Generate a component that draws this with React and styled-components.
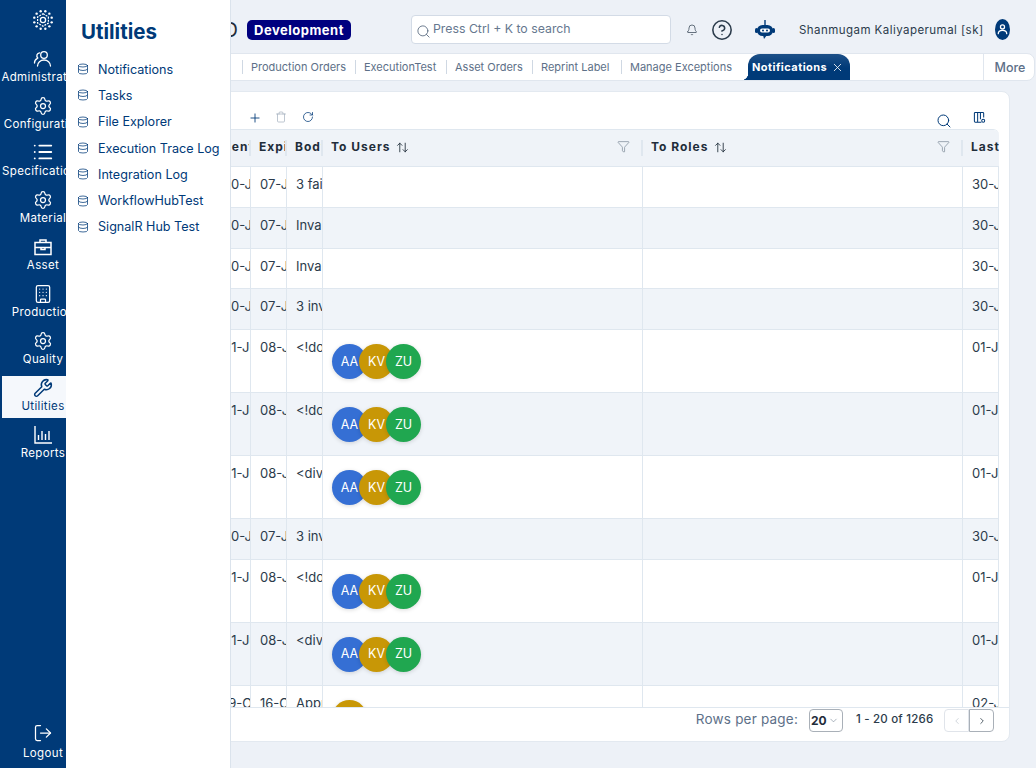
import React from "react";
import styled, { createGlobalStyle } from "styled-components";
import {
  Settings, List, Database, Plus, Trash, RotateCw, Search, Bell, CircleHelp, Funnel,
  ArrowUpDown, X, ChevronDown, ChevronLeft, ChevronRight, LogOut, Wrench, Building,
} from "lucide-react";

const NAVY = "#003a78";
const FONT = `Inter, "Noto Sans", "Liberation Sans", sans-serif`;

const Global = createGlobalStyle`
  html, body { margin: 0; height: 100%; background: #edf1f7; overflow: hidden; }
  * { box-sizing: border-box; }
  body { font-family: ${FONT}; }
`;

const Page = styled.div`
  position: relative;
  display: flex;
  width: 1036px;
  height: 768px;
  overflow: hidden;
`;

const Rail = styled.nav`
  flex: 0 0 86px;
  display: flex;
  flex-direction: column;
  align-items: center;
  background: ${NAVY};
  color: #fff;
  padding-top: 9px;
`;
const LogoMark = styled.div`
  height: 38px;
  display: flex;
  justify-content: center;
`;
const RailItem = styled.div`
  width: 82px;
  height: 42px;
  margin-bottom: 5px;
  flex: none;
  display: flex;
  flex-direction: column;
  align-items: center;
  justify-content: flex-end;
  gap: 1px;
  padding-bottom: 4px;
  background: ${(p) => (p.$active ? "#f5f8fc" : "transparent")};
  color: ${(p) => (p.$active ? NAVY : "#fff")};
  font-size: 11.5px;
  line-height: 15px;
  letter-spacing: 0.35px;
  white-space: nowrap;
`;
const RailBottom = styled(RailItem)`
  margin-top: auto;
  margin-bottom: 3px;
  gap: 3px;
`;

const Flyout = styled.aside`
  position: absolute;
  left: 66px;
  top: 0;
  bottom: 0;
  width: 165px;
  background: #fff;
  border-right: 1px solid #dbe3ec;
  padding: 19px 0 0 11px;
  color: ${NAVY};
`;
const FlyoutTitle = styled.h2`
  margin: 0 0 11px 4px;
  font-size: 20.5px;
  line-height: 26px;
  font-weight: 700;
`;
const FlyoutLink = styled.div`
  display: flex;
  align-items: center;
  gap: 9px;
  height: 26.3px;
  font-size: 12.6px;
  white-space: nowrap;
`;

const Main = styled.main`
  flex: 1;
  min-width: 0;
  display: flex;
  flex-direction: column;
`;

const Header = styled.header`
  height: 53px;
  flex: none;
  display: flex;
  align-items: center;
  padding-top: 12px;
  padding-bottom: 6px;
`;
const Brand = styled.div`
  width: 152px;
  text-align: right;
  font-size: 20px;
  font-weight: 400;
  color: #1f2d3a;
`;
const Badge = styled.div`
  margin-left: 9px;
  width: 104px;
  height: 20px;
  border-radius: 5px;
  background: #00007f;
  color: #fff;
  font-size: 13px;
  font-weight: 700;
  letter-spacing: 0.5px;
  display: flex;
  align-items: center;
  justify-content: center;
`;
const SearchBox = styled.div`
  margin-left: 60px;
  width: 260px;
  height: 29px;
  background: #fff;
  border: 1px solid #d3dbe6;
  border-radius: 4px;
  display: flex;
  align-items: center;
  gap: 2px;
  padding: 0 4px;
  color: #66788f;
  font-size: 12.3px;
  svg { margin-top: 4px; color: #4d6078; }
  span { margin-bottom: 2px; }
`;
const HeadIcons = styled.div`
  display: flex;
  align-items: center;
  margin-left: 15px;
  color: #2b3b4b;
`;
const HelpWrap = styled.div`
  display: flex;
  margin-left: 13px;
`;
const BotWrap = styled.div`
  display: flex;
  margin-left: 21px;
`;
const UserName = styled.div`
  margin-left: 23px;
  width: 184px;
  font-size: 11.5px;
  letter-spacing: 0.45px;
  color: #2b3b4b;
  white-space: nowrap;
`;
const UserAvatar = styled.div`
  margin-left: 12px;
  width: 15px;
  height: 21px;
  border-radius: 50%;
  background: ${NAVY};
  display: flex;
  align-items: center;
  justify-content: center;
`;

const TabBar = styled.div`
  height: 28px;
  flex: none;
  margin-right: 1px;
  background: #fff;
  border: 1px solid #e0e6ee;
  border-radius: 0 8px 8px 0;
  display: flex;
  align-items: center;
`;
const Tab = styled.div`
  flex: 0 0 ${(p) => p.$w}px;
  height: 14px;
  border-right: ${(p) => (p.$last ? "none" : "1px solid #cfd8e3")};
  padding-left: ${(p) => p.$pad ?? 8}px;
  font-size: 11px;
  line-height: 14px;
  color: #5d7088;
  white-space: nowrap;
  overflow: hidden;
`;
const ActiveTab = styled.div`
  position: relative;
  margin-left: 8px;
  flex: 0 0 102px;
  height: 26px;
  align-self: flex-end;
  border-radius: 12px 12px 0 0;
  background: linear-gradient(#1d5088, ${NAVY} 55%);
  color: #fff;
  font-size: 11px;
  font-weight: 700;
  letter-spacing: 0.45px;
  display: flex;
  align-items: center;
  gap: 4px;
  padding-left: 4px;
  white-space: nowrap;
  &::before {
    content: "";
    position: absolute;
    left: -7px;
    bottom: 0;
    width: 7px;
    height: 7px;
    background: radial-gradient(circle at 0 0, transparent 7px, ${NAVY} 7.5px);
  }
`;
const More = styled.div`
  margin-left: auto;
  width: 51px;
  height: 100%;
  padding-left: 2px;
  border-left: 1px solid #e0e6ee;
  display: flex;
  align-items: center;
  justify-content: center;
  font-size: 12.5px;
  font-weight: 500;
  color: #5d7088;
`;

const Card = styled.section`
  margin: 10px 26px 26px 10px;
  flex: 1;
  min-height: 0;
  background: #fff;
  border: 1px solid #e3e9f0;
  border-radius: 8px;
  padding: 0 10px;
  display: flex;
  flex-direction: column;
`;
const Toolbar = styled.div`
  height: 37px;
  flex: none;
  display: flex;
  align-items: flex-start;
  padding: 19px 13px 0 141px;
  gap: 13px;
  color: ${NAVY};
`;
const ToolSpacer = styled.div`
  flex: 1;
`;
const TrashWrap = styled.div`
  display: flex;
  margin-right: 2px;
  color: #9aa8b8;
`;
const SearchTool = styled.div`
  display: flex;
  margin-top: 2px;
  margin-right: 8px;
`;
const TableView = styled.div`
  flex: 1;
  min-height: 0;
  overflow: hidden;
  border: solid #dfe7ef;
  border-width: 1px 0 0 0;
  border-radius: 6px 6px 0 0;
`;
const columns = "108px 36px 36px 36px 320px 320px 36px";
const HeadRow = styled.div`
  display: grid;
  grid-template-columns: ${columns};
  height: 37px;
  background: #eff3f8;
  border-bottom: 1px solid #dfe7ef;
`;
const HeadCell = styled.div`
  display: flex;
  align-items: center;
  min-width: 0;
  padding-left: 8px;
  font-size: 12px;
  font-weight: 700;
  letter-spacing: 1px;
  color: #1f2d3a;
  white-space: nowrap;
  padding-bottom: 3px;
`;
const HeadLabel = styled.span`
  flex: 1;
  min-width: 0;
  overflow: hidden;
  display: flex;
  align-items: center;
  gap: 5px;
  svg { flex: none; margin-top: 2px; }
`;
const HeadFilter = styled.span`
  display: flex;
  color: #6f7e8e;
  margin-right: 11px;
`;
const HeadDivider = styled.i`
  flex: none;
  width: 2px;
  height: 16px;
  margin-top: 2px;
  background: #dfe7ef;
`;
const Row = styled.div`
  display: grid;
  grid-template-columns: ${columns};
  height: ${(p) => (p.$tall ? 63 : 40.75)}px;
  background: ${(p) => (p.$alt ? "#f0f4f9" : "#fff")};
  border-bottom: 1px solid #dfe7ef;
`;
const Cell = styled.div`
  min-width: 0;
  overflow: hidden;
  white-space: nowrap;
  padding: 8px 0 0 ${(p) => p.$pad ?? 9}px;
  border-right: 1px solid #dfe7ef;
  font-size: 13px;
  line-height: 18px;
  color: #2b3b4b;
`;
const AvatarCell = styled(Cell)`
  padding: 14px 0 0 9px;
  display: flex;
`;
const Avatar = styled.div`
  flex: none;
  width: 35px;
  height: 35px;
  border-radius: 50%;
  margin-right: -8px;
  background: ${(p) => p.$bg};
  color: #fff;
  font-size: 12.5px;
  display: flex;
  align-items: center;
  justify-content: center;
  box-shadow: 0 1px 4px rgba(0, 0, 0, 0.15);
`;
const Pager = styled.footer`
  height: 34px;
  flex: none;
  margin: 0 -10px;
  padding: 1px 15px 0 0;
  border-top: 1px solid #dfe7ef;
  display: flex;
  align-items: flex-start;
  justify-content: flex-end;
  font-size: 13px;
  line-height: 21px;
`;
const PagerLabel = styled.span`
  color: #5d7088;
  font-size: 13.5px;
  letter-spacing: 0.2px;
`;
const SizeSelect = styled.div`
  margin-left: 11px;
  width: 34px;
  height: 23px;
  border: 1px solid #a9b0b8;
  border-radius: 4px;
  display: flex;
  align-items: center;
  justify-content: space-between;
  padding: 0 3px 0 1px;
  font-size: 12px;
  font-weight: 700;
  color: #1f2d3a;
  svg { color: #7c8a9a; }
`;
const Range = styled.span`
  margin-left: 13px;
  width: 88px;
  font-size: 11.5px;
  font-weight: 500;
  letter-spacing: 0.2px;
  color: #2b3b4b;
`;
const PageBtn = styled.div`
  width: 25px;
  height: 23px;
  display: flex;
  align-items: center;
  justify-content: center;
  border: 1px solid ${(p) => (p.$off ? "#e0e4ea" : "#a9b0b8")};
  border-radius: ${(p) => (p.$off ? "4px 0 0 4px" : "0 4px 4px 0")};
  color: ${(p) => (p.$off ? "#b5bdc7" : "#1f2d3a")};
`;

const Logo = () => {
  const pts = Array.from({ length: 12 }, (_, i) => {
    const a = (i * Math.PI) / 6 + Math.PI / 12;
    return [11 + 9 * Math.cos(a), 11 + 9 * Math.sin(a)];
  });
  return (
    <svg width="22" height="22" viewBox="0 0 22 22" fill="#fff">
      {pts.map(([x, y], i) => <circle key={i} cx={x} cy={y} r="1.2" />)}
      <path d="M11 4.8l5.4 3.1v6.2L11 17.2l-5.4-3.1V7.9z" fill="none" stroke="#fff" strokeWidth="1.2" strokeDasharray="2 1" />
      <circle cx="11" cy="11" r="2.6" fill="none" stroke="#fff" strokeWidth="1.3" />
    </svg>
  );
};
const AdminIcon = () => (
  <svg width="20" height="20" viewBox="0 0 20 20" fill="none" stroke="currentColor" strokeWidth="1.3" strokeLinecap="round">
    <circle cx="11" cy="6" r="3.3" />
    <path d="M4.5 17c0-3.6 3-6 6.5-6s6.5 2.4 6.5 6" />
    <path d="M6.6 3.8A3 3 0 0 0 4.8 9M1.5 14c0-2 .9-3.6 2.6-4.4" />
  </svg>
);
const AssetIcon = () => (
  <svg width="20" height="20" viewBox="0 0 20 20" fill="none" stroke="currentColor" strokeWidth="1.5">
    <path d="M2 5.5h16v12H2zM2 10.5h16M7 5.5V3h6v2.5M8 10.5v2h4v-2" />
  </svg>
);
const ReportIcon = () => (
  <svg width="20" height="20" viewBox="0 0 20 20" fill="none" stroke="currentColor" strokeWidth="1.4">
    <path d="M2 1v17h17" />
    <path d="M5.5 10v5M9 6v9M12.5 9v6M16 6v9" />
  </svg>
);
const BotIcon = () => (
  <svg width="22" height="22" viewBox="0 0 22 22">
    <path d="M11 1v5" stroke={NAVY} strokeWidth="1.4" />
    <rect x="3" y="6" width="16" height="11" rx="5.5" fill={NAVY} />
    <rect x="1" y="9" width="3" height="5" rx="1.5" fill={NAVY} />
    <rect x="18" y="9" width="3" height="5" rx="1.5" fill={NAVY} />
    <path d="M9 16l1 4 3-4z" fill={NAVY} />
    <rect x="6" y="9.6" width="10" height="4" rx="2" fill="#fff" />
    <circle cx="9" cy="11.6" r="1" fill={NAVY} />
    <circle cx="13" cy="11.6" r="1" fill={NAVY} />
  </svg>
);
const ColumnsIcon = () => (
  <svg width="13" height="13" viewBox="0 0 14 14" fill="none" stroke="currentColor" strokeWidth="1.1">
    <path d="M9 12H2.5a1 1 0 0 1-1-1V2.5a1 1 0 0 1 1-1h8a1 1 0 0 1 1 1V7M5 1.5V12M8 1.5V9" />
    <circle cx="11" cy="10.5" r="1.6" />
  </svg>
);
const PersonIcon = () => (
  <svg width="11" height="13" viewBox="0 0 13 15" fill="none" stroke="#fff" strokeWidth="1.5" strokeLinecap="round">
    <circle cx="6.5" cy="4.5" r="2.4" />
    <path d="M1.5 12.5c0-2.6 2.2-4 5-4s5 1.4 5 4" />
  </svg>
);

const railItems = [
  ["Administration", <AdminIcon />],
  ["Configuration", <Settings size={20} strokeWidth={1.5} />],
  ["Specifications", <List size={22} strokeWidth={2} />],
  ["Material", <Settings size={20} strokeWidth={1.5} />],
  ["Asset", <AssetIcon />],
  ["Production", <Building size={20} strokeWidth={1.5} />],
  ["Quality", <Settings size={20} strokeWidth={1.5} />],
  ["Utilities", <Wrench size={20} strokeWidth={1.8} />, true],
  ["Reports", <ReportIcon />],
];
const links = ["Notifications", "Tasks", "File Explorer", "Execution Trace Log", "Integration Log", "WorkflowHubTest", "SignalR Hub Test"];
const tabs = [["Work Orders", 156, 40], ["Production Orders", 113], ["ExecutionTest", 91], ["Asset Orders", 86], ["Reprint Label", 89]];

const trio = ["AA", "KV", "ZU"];
const colors = { AA: "#356fd4", KV: "#c89706", ZU: "#20a750" };
const rows = [
  ["30-Jun-2025", "07-Jul-2025", "3 failed", [], "30-Jun-2025"],
  ["30-Jun-2025", "07-Jul-2025", "Invalid", [], "30-Jun-2025"],
  ["30-Jun-2025", "07-Jul-2025", "Invalid", [], "30-Jun-2025"],
  ["30-Jun-2025", "07-Jul-2025", "3 invalid", [], "30-Jun-2025"],
  ["01-Jul-2025", "08-Jul-2025", "<!doctype", trio, "01-Jul-2025"],
  ["01-Jul-2025", "08-Jul-2025", "<!doctype", trio, "01-Jul-2025"],
  ["01-Jul-2025", "08-Jul-2025", "<div>", trio, "01-Jul-2025"],
  ["30-Jun-2025", "07-Jul-2025", "3 invalid", [], "30-Jun-2025"],
  ["01-Jul-2025", "08-Jul-2025", "<!doctype", trio, "01-Jul-2025"],
  ["01-Jul-2025", "08-Jul-2025", "<div>", trio, "01-Jul-2025"],
  ["19-Oct-2024", "16-Oct-2025", "Approved", ["KV"], "02-Jul-2025"],
];

export default function App() {
  return (
    <Page>
      <Global />
      <Rail>
        <LogoMark><Logo /></LogoMark>
        {railItems.map(([label, icon, active]) => (
          <RailItem key={label} $active={active}>{icon}<span>{label}</span></RailItem>
        ))}
        <RailBottom>
          <LogOut size={20} strokeWidth={1.5} />
          <span>Logout</span>
        </RailBottom>
      </Rail>
      <Flyout>
        <FlyoutTitle>Utilities</FlyoutTitle>
        {links.map((l) => (
          <FlyoutLink key={l}><Database size={12} strokeWidth={1.5} />{l}</FlyoutLink>
        ))}
      </Flyout>
      <Main>
        <Header>
          <Brand>MOD</Brand>
          <Badge>Development</Badge>
          <SearchBox>
            <Search size={15} strokeWidth={1.3} />
            <span>Press Ctrl + K to search</span>
          </SearchBox>
          <HeadIcons>
            <Bell size={12} strokeWidth={1.4} />
            <HelpWrap><CircleHelp size={22} strokeWidth={1.7} /></HelpWrap>
            <BotWrap><BotIcon /></BotWrap>
          </HeadIcons>
          <UserName>Shanmugam Kaliyaperumal [sk]</UserName>
          <UserAvatar><PersonIcon /></UserAvatar>
        </Header>
        <TabBar>
          {tabs.map(([t, w, pad]) => <Tab key={t} $w={w} $pad={pad}>{t}</Tab>)}
          <Tab $w={118} $last>Manage Exceptions</Tab>
          <ActiveTab>Notifications<X size={13} strokeWidth={1.5} /></ActiveTab>
          <More>More</More>
        </TabBar>
        <Card>
          <Toolbar>
            <Plus size={14} strokeWidth={1.5} />
            <TrashWrap><Trash size={12} strokeWidth={1.3} /></TrashWrap>
            <RotateCw size={12} strokeWidth={1.5} />
            <ToolSpacer />
            <SearchTool><Search size={16} strokeWidth={1.5} /></SearchTool>
            <ColumnsIcon />
          </Toolbar>
          <TableView>
            <HeadRow>
              <HeadCell />
              <HeadCell><HeadLabel>Sent On</HeadLabel><HeadDivider /></HeadCell>
              <HeadCell><HeadLabel>Expiry</HeadLabel><HeadDivider /></HeadCell>
              <HeadCell><HeadLabel>Body</HeadLabel><HeadDivider /></HeadCell>
              <HeadCell>
                <HeadLabel>To Users <ArrowUpDown size={13} strokeWidth={1.6} /></HeadLabel>
                <HeadFilter><Funnel size={13} strokeWidth={1.2} /></HeadFilter>
                <HeadDivider />
              </HeadCell>
              <HeadCell>
                <HeadLabel>To Roles <ArrowUpDown size={13} strokeWidth={1.6} /></HeadLabel>
                <HeadFilter><Funnel size={13} strokeWidth={1.2} /></HeadFilter>
                <HeadDivider />
              </HeadCell>
              <HeadCell><HeadLabel>Last Sent</HeadLabel></HeadCell>
            </HeadRow>
            {rows.map(([a, b, c, users, d], i) => (
              <Row key={i} $alt={i % 2 === 1} $tall={users.length > 0}>
                <Cell />
                <Cell $pad={8}>{a}</Cell>
                <Cell>{b}</Cell>
                <Cell>{c}</Cell>
                <AvatarCell>
                  {users.map((u) => <Avatar key={u} $bg={colors[u]}>{u}</Avatar>)}
                </AvatarCell>
                <Cell />
                <Cell>{d}</Cell>
              </Row>
            ))}
          </TableView>
          <Pager>
            <PagerLabel>Rows per page:</PagerLabel>
            <SizeSelect>20<ChevronDown size={11} strokeWidth={1.4} /></SizeSelect>
            <Range>1 - 20 of 1266</Range>
            <PageBtn $off><ChevronLeft size={10} strokeWidth={1.5} /></PageBtn>
            <PageBtn><ChevronRight size={10} strokeWidth={1.8} /></PageBtn>
          </Pager>
        </Card>
      </Main>
    </Page>
  );
}
